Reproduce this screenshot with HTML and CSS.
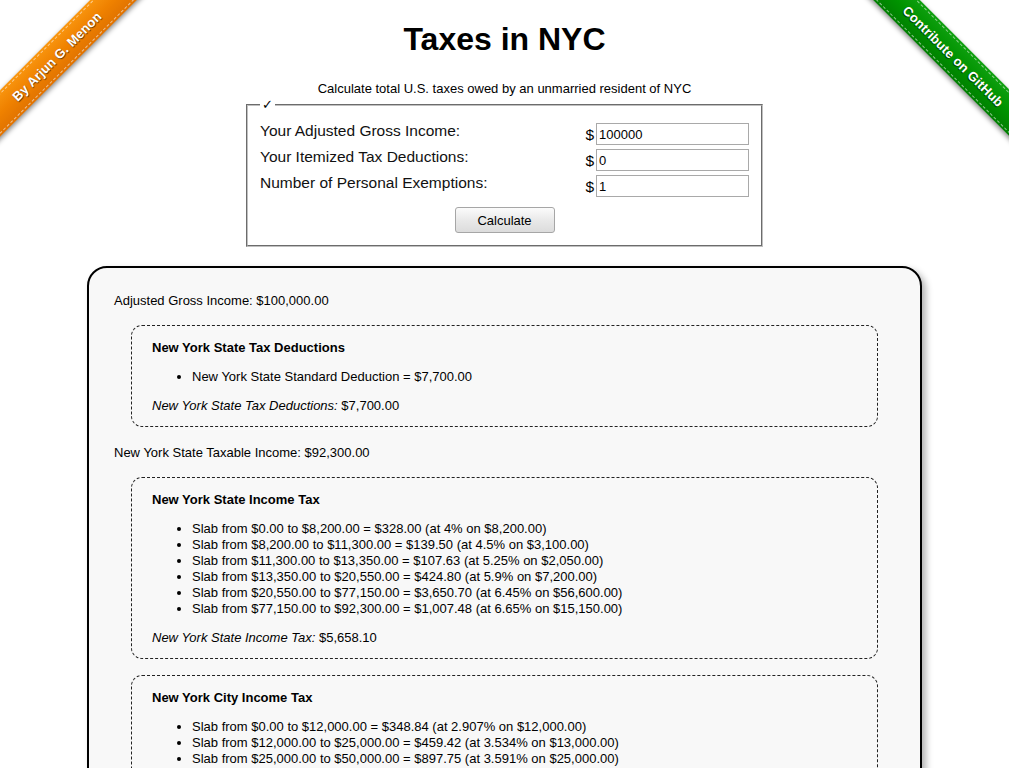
FILE: index.html
```html
<!DOCTYPE html>
<html lang="en">
<head>
<meta charset="utf-8">
<title>Taxes in NYC</title>
<link rel="stylesheet" href="styles.css">
</head>
<body>
<a class="ribbon ribbon-left" href="#"><span class="band band-orange">By Arjun G. Menon</span></a>
<a class="ribbon ribbon-right" href="#"><span class="band band-green">Contribute on GitHub</span></a>

<h1 class="title">Taxes in NYC</h1>
<p class="subtitle">Calculate total U.S. taxes owed by an unmarried resident of NYC</p>

<form class="calc-form">
  <fieldset class="calc-fieldset">
    <legend class="calc-legend">✓</legend>
    <div class="calc-row">
      <label class="calc-label" for="agi">Your Adjusted Gross Income:</label>
      <span class="calc-field"><span class="dollar">$</span><input class="calc-input" id="agi" type="text" value="100000"></span>
    </div>
    <div class="calc-row">
      <label class="calc-label" for="ded">Your Itemized Tax Deductions:</label>
      <span class="calc-field"><span class="dollar">$</span><input class="calc-input" id="ded" type="text" value="0"></span>
    </div>
    <div class="calc-row">
      <label class="calc-label" for="ex">Number of Personal Exemptions:</label>
      <span class="calc-field"><span class="dollar">$</span><input class="calc-input" id="ex" type="text" value="1"></span>
    </div>
    <div class="calc-actions">
      <button class="calc-button" type="button">Calculate</button>
    </div>
  </fieldset>
</form>

<div class="results">
  <div class="line">Adjusted Gross Income: $100,000.00</div>

  <div class="section">
    <h3 class="section-title">New York State Tax Deductions</h3>
    <ul class="section-list">
      <li>New York State Standard Deduction = $7,700.00</li>
    </ul>
    <p class="section-total"><em>New York State Tax Deductions:</em> $7,700.00</p>
  </div>

  <div class="line">New York State Taxable Income: $92,300.00</div>

  <div class="section">
    <h3 class="section-title">New York State Income Tax</h3>
    <ul class="section-list">
      <li>Slab from $0.00 to $8,200.00 = $328.00 (at 4% on $8,200.00)</li>
      <li>Slab from $8,200.00 to $11,300.00 = $139.50 (at 4.5% on $3,100.00)</li>
      <li>Slab from $11,300.00 to $13,350.00 = $107.63 (at 5.25% on $2,050.00)</li>
      <li>Slab from $13,350.00 to $20,550.00 = $424.80 (at 5.9% on $7,200.00)</li>
      <li>Slab from $20,550.00 to $77,150.00 = $3,650.70 (at 6.45% on $56,600.00)</li>
      <li>Slab from $77,150.00 to $92,300.00 = $1,007.48 (at 6.65% on $15,150.00)</li>
    </ul>
    <p class="section-total"><em>New York State Income Tax:</em> $5,658.10</p>
  </div>

  <div class="section">
    <h3 class="section-title">New York City Income Tax</h3>
    <ul class="section-list">
      <li>Slab from $0.00 to $12,000.00 = $348.84 (at 2.907% on $12,000.00)</li>
      <li>Slab from $12,000.00 to $25,000.00 = $459.42 (at 3.534% on $13,000.00)</li>
      <li>Slab from $25,000.00 to $50,000.00 = $897.75 (at 3.591% on $25,000.00)</li>
    </ul>
  </div>
</div>
</body>
</html>
```
FILE: styles.css
```css
html, body {
  background: #fff;
}
body {
  margin: 0;
  padding: 0 0 40px;
  font-family: "Liberation Sans", Arial, sans-serif;
  font-size: 13px;
  line-height: 16px;
  color: #000;
}

/* ribbons */
.ribbon {
  position: absolute;
  top: 0;
  width: 150px;
  height: 150px;
  overflow: hidden;
  z-index: 10;
  text-decoration: none;
}
.ribbon-left { left: 0; }
.ribbon-right { right: 0; }
.band {
  position: absolute;
  top: 40px;
  width: 240px;
  height: 33px;
  line-height: 33px;
  text-align: center;
  color: #fff;
  font-weight: bold;
  font-size: 13px;
  letter-spacing: 0.2px;
  text-shadow: 0 1px 1px rgba(0,0,0,0.65);
  box-shadow: 0 2px 5px rgba(0,0,0,0.45);
}
.band::before {
  content: "";
  position: absolute;
  left: 0;
  right: 0;
  top: 2px;
  bottom: 2px;
  border-top: 1px dashed rgba(255,255,255,0.55);
  border-bottom: 1px dashed rgba(255,255,255,0.55);
}
.band-orange {
  left: -63.5px;
  transform: rotate(-45deg);
  background: linear-gradient(#f9960f, #ef8100 50%, #e07200);
}
.band-green {
  right: -63.5px;
  transform: rotate(45deg);
  background: linear-gradient(#10a010, #009300 50%, #007f00);
}

/* header */
.title {
  margin: 21px 0 0;
  font-size: 32px;
  line-height: 37px;
  font-weight: bold;
  text-align: center;
}
.subtitle {
  margin: 23px 0 0;
  text-align: center;
}

/* form */
.calc-form {
  margin: 0;
}
.calc-fieldset {
  box-sizing: content-box;
  width: 489px;
  margin: 0 auto;
  padding: 8px 12px 12px;
  border: 2px groove #c0c0c0;
}
.calc-legend {
  padding: 0 2px;
  font-family: "DejaVu Sans", sans-serif;
  font-size: 13px;
  line-height: 16px;
}
.calc-row {
  display: flex;
  align-items: center;
  justify-content: space-between;
  height: 26px;
}
.calc-label {
  align-self: flex-start;
  margin-top: 1px;
  font-size: 15.5px;
  line-height: 18px;
  color: #111;
}
.calc-field {
  display: flex;
  align-items: center;
}
.dollar {
  font-size: 15.5px;
  margin-right: 2px;
  margin-top: 1px;
}
.calc-input {
  box-sizing: border-box;
  width: 153px;
  height: 22px;
  margin: 0;
  padding: 0 2px;
  border: 1px solid #a9a9a9;
  font-family: "Liberation Sans", Arial, sans-serif;
  font-size: 13px;
  color: #000;
  background: #fff;
}
.calc-actions {
  display: flex;
  justify-content: center;
  margin-top: 8px;
}
.calc-button {
  box-sizing: border-box;
  width: 100px;
  height: 26px;
  margin: 0;
  padding: 0;
  border: 1px solid #a6a6a6;
  border-radius: 3px;
  background: linear-gradient(#fbfbfb, #e9e9e9 50%, #dcdcdc);
  font-family: "Liberation Sans", Arial, sans-serif;
  font-size: 13px;
  color: #000;
}

/* results */
.results {
  box-sizing: border-box;
  width: 835px;
  margin: 19px auto 0;
  padding: 23px 25px 30px;
  border: 2px solid #000;
  border-radius: 20px;
  background: #f8f8f8;
  box-shadow: 4px 4px 7px rgba(0,0,0,0.3);
}
.line {
  margin: 0;
  padding-top: 2px;
}
.section {
  margin: 16px 17px;
  padding: 0 20px;
  border: 1px dashed #222;
  border-radius: 11px;
}
.section-title {
  margin: 14px 0 13px;
  font-size: 13px;
  font-weight: bold;
}
.section-list {
  margin: 13px 0;
  padding-left: 40px;
}
.section-total {
  margin: 13px 0 12px;
}
```
